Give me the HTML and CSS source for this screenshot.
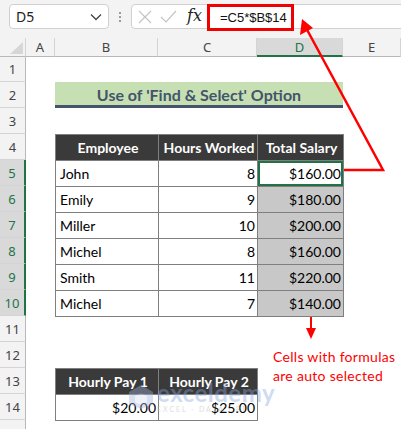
FILE: index.html
```html
<!DOCTYPE html>
<html>
<head>
<meta charset="utf-8">
<link rel="stylesheet" href="styles.css">
</head>
<body>
<div class="app">
  <div class="topbar">
    <div class="namebox">
      <span class="nb-text">D5</span>
      <svg class="chev" width="12" height="8" viewBox="0 0 12 8"><path d="M1 1.5 L6 6.5 L11 1.5" fill="none" stroke="#444" stroke-width="1.3"/></svg>
    </div>
    <div class="dots"><i></i><i></i><i></i></div>
    <div class="fbar">
      <svg class="ico" width="14" height="14" viewBox="0 0 14 14"><path d="M1 1 L13 13 M13 1 L1 13" stroke="#c4c4c4" stroke-width="1.2" fill="none"/></svg>
      <svg class="ico" width="17" height="14" viewBox="0 0 17 14"><path d="M1 7 L6 12 L16 1" stroke="#c4c4c4" stroke-width="1.2" fill="none"/></svg>
      <span class="fx">fx</span>
      <div class="formula">=C5*$B$14</div>
    </div>
  </div>

  <div class="sheet">
    <div class="corner"><svg width="20" height="13" viewBox="0 0 20 13"><path d="M19 0 L19 12 L6 12 Z" fill="#d6d6d6"/></svg></div>
    <div class="ch">A</div>
    <div class="ch">B</div>
    <div class="ch">C</div>
    <div class="ch sel">D</div>
    <div class="ch">E</div>

    <div class="rh r1">1</div>
    <div class="rh">2</div>
    <div class="rh">3</div>
    <div class="rh">4</div>
    <div class="rh sel">5</div>
    <div class="rh sel">6</div>
    <div class="rh sel">7</div>
    <div class="rh sel">8</div>
    <div class="rh sel">9</div>
    <div class="rh sel">10</div>
    <div class="rh">11</div>
    <div class="rh">12</div>
    <div class="rh">13</div>
    <div class="rh">14</div>
    <div class="rh"></div>

    <div class="title">Use of 'Find &amp; Select' Option</div>

    <table class="t1">
      <colgroup><col class="cb"><col class="cc"><col class="cd"></colgroup>
      <tr class="hd"><th>Employee</th><th>Hours Worked</th><th>Total Salary</th></tr>
      <tr><td>John</td><td class="n">8</td><td class="n active">$160.00</td></tr>
      <tr><td>Emily</td><td class="n">9</td><td class="n hl">$180.00</td></tr>
      <tr><td>Miller</td><td class="n">10</td><td class="n hl">$200.00</td></tr>
      <tr><td>Michel</td><td class="n">8</td><td class="n hl">$160.00</td></tr>
      <tr><td>Smith</td><td class="n">11</td><td class="n hl">$220.00</td></tr>
      <tr><td>Michel</td><td class="n">7</td><td class="n hl">$140.00</td></tr>
    </table>

    <table class="t2">
      <colgroup><col class="cb"><col class="cc"></colgroup>
      <tr class="hd"><th>Hourly Pay 1</th><th>Hourly Pay 2</th></tr>
      <tr><td class="n">$20.00</td><td class="n">$25.00</td></tr>
    </table>
  </div>

  <div class="watermark">
    <svg width="26" height="26" viewBox="0 0 26 26"><path d="M13 1 L25 8 L25 20 L13 25 L1 20 L1 8 Z" fill="#9fb3dd"/><path d="M13 9 L19 12 L19 18 L13 21 L7 18 L7 12 Z" fill="#fff" opacity="0.6"/></svg>
    <div class="wm-text"><span class="wm-big">exceldemy</span><span class="wm-small">EXCEL · DATA · BI</span></div>
  </div>

  <div class="note">Cells with formulas<br>are auto selected</div>

  <svg class="arrows" width="401" height="429" viewBox="0 0 401 429">
    <path d="M305 26 L383 170 L344 170" fill="none" stroke="#ff0000" stroke-width="2.5"/>
    <path d="M302 19 L300 35 L313 28 Z" fill="#ff0000"/>
    <path d="M311 317 L311 330" stroke="#ff0000" stroke-width="2"/>
    <path d="M306 328 L316 328 L311 339 Z" fill="#ff0000"/>
  </svg>
</div>
</body>
</html>
```

FILE: styles.css
```css
html, body {
  margin: 0;
  padding: 0;
}
body {
  width: 401px;
  height: 429px;
  overflow: hidden;
  background: #ffffff;
  font-family: Lato, "Noto Sans", "Liberation Sans", sans-serif;
}
.app {
  position: relative;
  width: 401px;
  height: 429px;
  overflow: hidden;
}
.topbar {
  height: 38px;
  background: #f3f3f3;
  display: flex;
  align-items: flex-start;
  padding-top: 4px;
  box-sizing: border-box;
}
.namebox {
  margin-left: 9px;
  width: 100px;
  height: 25px;
  box-sizing: border-box;
  background: #fff;
  border: 1px solid #d0d0d0;
  border-radius: 4px;
  display: flex;
  align-items: center;
  justify-content: space-between;
  padding: 0 6px 0 6px;
}
.nb-text {
  font-size: 14px;
  color: #222;
  font-family: "Noto Sans", "Liberation Sans", sans-serif;
}
.chev { margin-top: 1px; }
.dots {
  width: 22px;
  height: 25px;
  display: flex;
  flex-direction: column;
  align-items: center;
  justify-content: center;
  gap: 2px;
}
.dots i {
  display: block;
  width: 2px;
  height: 2px;
  background: #9a9a9a;
}
.fbar {
  flex: 1;
  height: 25px;
  margin-right: -10px;
  box-sizing: border-box;
  background: #fff;
  border: 1px solid #d0d0d0;
  border-radius: 4px 0 0 4px;
  display: flex;
  align-items: center;
  padding-left: 6px;
}
.ico { margin-right: 8px; }
.fx {
  font-family: "DejaVu Serif", "Liberation Serif", serif;
  font-style: italic;
  font-size: 16px;
  color: #222;
  margin-left: 2px;
  margin-top: -3px;
}
.formula {
  margin-left: 5px;
  height: 27px;
  margin-top: 2px;
  width: 87px;
  box-sizing: border-box;
  border: 3px solid #f00000;
  font-size: 13px;
  color: #111;
  font-family: "Liberation Sans", Arial, sans-serif;
  display: flex;
  align-items: center;
  padding-left: 10px;
  background: #fff;
  white-space: nowrap;
}

.sheet {
  display: grid;
  grid-template-columns: 26px 29px 103px 99px 86px 58px;
  grid-template-rows: 19px 25px repeat(14, 26px);
  background: #fff;
}
.corner {
  grid-column: 1;
  grid-row: 1;
  background: #f3f3f3;
  border-right: 1px solid #d4d4d4;
  border-bottom: 1px solid #b8b8b8;
  box-sizing: border-box;
  display: flex;
  align-items: flex-end;
  justify-content: flex-end;
  padding: 0 1px 1px 0;
}
.ch {
  grid-row: 1;
  background: #f3f3f3;
  border-right: 1px solid #d4d4d4;
  border-bottom: 1px solid #b8b8b8;
  box-sizing: border-box;
  font-size: 13px;
  color: #444;
  display: flex;
  align-items: center;
  justify-content: center;
  font-family: "Noto Sans", "Liberation Sans", sans-serif;
}
.ch.sel {
  background: #d9d9d9;
  color: #217346;
  border-bottom: 2px solid #217346;
}
.rh {
  grid-column: 1;
  background: #f3f3f3;
  border-right: 1px solid #b8b8b8;
  border-bottom: 1px solid #d4d4d4;
  box-sizing: border-box;
  font-size: 13px;
  color: #444;
  display: flex;
  align-items: flex-end;
  justify-content: center;
  padding-bottom: 3px;
  font-family: "Noto Sans", "Liberation Sans", sans-serif;
}
.rh.sel {
  background: #d9d9d9;
  color: #217346;
  border-right: 2px solid #217346;
}
.title {
  grid-column: 3 / 6;
  grid-row: 3;
  background: #c6e0b4;
  border-bottom: 3px solid #44546a;
  box-sizing: border-box;
  color: #44546a;
  font-weight: bold;
  font-size: 16px;
  display: flex;
  align-items: center;
  justify-content: center;
  padding-top: 1px;
}
table {
  border-collapse: collapse;
  table-layout: fixed;
  width: 100%;
  height: 100%;
  font-size: 14px;
}
col.cb { width: 103px; }
col.cc { width: 99px; }
col.cd { width: 86px; }
.t1 {
  grid-column: 3 / 6;
  grid-row: 5 / 12;
}
.t2 {
  grid-column: 3 / 5;
  grid-row: 14 / 16;
}
th, td {
  border: 1px solid #7f7f7f;
  height: 26px;
  padding: 0 2px 0 4px;
  box-sizing: border-box;
  white-space: nowrap;
}
th {
  background: #3a3a3a;
  color: #fff;
  font-weight: bold;
  text-align: center;
}
td {
  color: #000;
  text-align: left;
}
td.n { text-align: right; }
td.hl { background: #c8c8c8; }
td.active {
  box-shadow: inset 0 0 0 2px #217346;
}
.watermark {
  position: absolute;
  left: 128px;
  top: 381px;
  display: flex;
  align-items: center;
  gap: 3px;
  opacity: 0.4;
  pointer-events: none;
}
.wm-text {
  display: flex;
  flex-direction: column;
  line-height: 1;
}
.wm-big {
  font-size: 24px;
  font-weight: bold;
  color: #8aa6de;
  letter-spacing: 0.5px;
}
.wm-small {
  font-size: 7px;
  color: #aaa;
  letter-spacing: 2px;
  margin-top: 1px;
}
.note {
  position: absolute;
  left: 273px;
  top: 347px;
  color: #ff0000;
  font-size: 14px;
  line-height: 19px;
  letter-spacing: 0.3px;
}
.arrows {
  position: absolute;
  left: 0;
  top: 0;
  pointer-events: none;
}
```
